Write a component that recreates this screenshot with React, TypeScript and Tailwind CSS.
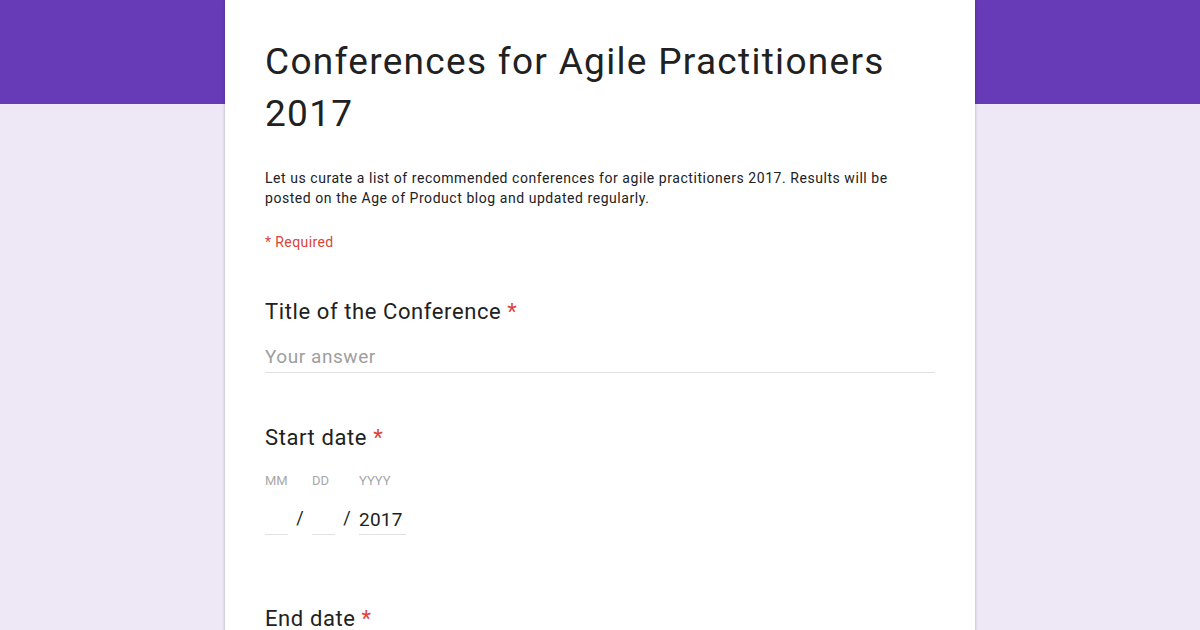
import React from 'react'

const Req = () => <span className="ml-1.5 text-[#db4437]">*</span>

const QuestionTitle = ({ children }: { children: React.ReactNode }) => (
  <div className="text-[22px] leading-[28px] tracking-[0.6px] text-[#212121]">
    {children}
    <Req />
  </div>
)

const DatePart = ({ label, width, value }: { label: string; width: string; value?: string }) => (
  <div className="flex flex-col">
    <div className="h-4 text-[13px] leading-4 text-[#a8a8a8]">{label}</div>
    <div
      className={`mt-[19px] h-[27px] border-b border-[#e0e0e0] text-[19px] leading-6 tracking-[0.2px] text-[#212121] ${width}`}
    >
      {value}
    </div>
  </div>
)

const Slash = () => (
  <div className="flex h-[62px] w-6 items-end justify-center pb-[5px] text-[18px] leading-6 text-[#212121]">
    /
  </div>
)

export default function App() {
  return (
    <div
      className="h-[630px] w-[1200px] overflow-hidden bg-[linear-gradient(#673ab7_0_104px,#ede7f6_104px)]"
      style={{ fontFamily: 'Roboto, "Noto Sans", Arial, sans-serif' }}
    >
      <div className="mx-auto h-[700px] w-[750px] bg-white px-10 pt-9 shadow-[0_0_3px_rgba(0,0,0,0.25)]">
        {/* header */}
        <h1 className="text-[37px] leading-[52px] tracking-[1.3px] text-[#212121]">
          Conferences for Agile Practitioners 2017
        </h1>
        <p className="mt-7 text-[14px] leading-5 tracking-[0.55px] text-[#202124]">
          Let us curate a list of recommended conferences for agile practitioners 2017. Results will be
          posted on the Age of Product blog and updated regularly.
        </p>
        <div className="mt-6 text-[14px] leading-5 tracking-[0.4px] text-[#db4437]">* Required</div>

        {/* question: title */}
        <div className="mt-[46px]">
          <QuestionTitle>Title of the Conference</QuestionTitle>
          <div className="mt-[19px] h-[28px] border-b border-[#e0e0e0] text-[19px] leading-6 tracking-[0.55px] text-[#9e9e9e]">
            Your answer
          </div>
        </div>

        {/* question: start date */}
        <div className="mt-[51px]">
          <QuestionTitle>Start date</QuestionTitle>
          <div className="mt-[21px] flex">
            <DatePart label="MM" width="w-[23px]" />
            <Slash />
            <DatePart label="DD" width="w-[23px]" />
            <Slash />
            <DatePart label="YYYY" width="w-[47px]" value="2017" />
          </div>
        </div>

        {/* question: end date */}
        <div className="mt-[70px]">
          <QuestionTitle>End date</QuestionTitle>
        </div>
      </div>
    </div>
  )
}
